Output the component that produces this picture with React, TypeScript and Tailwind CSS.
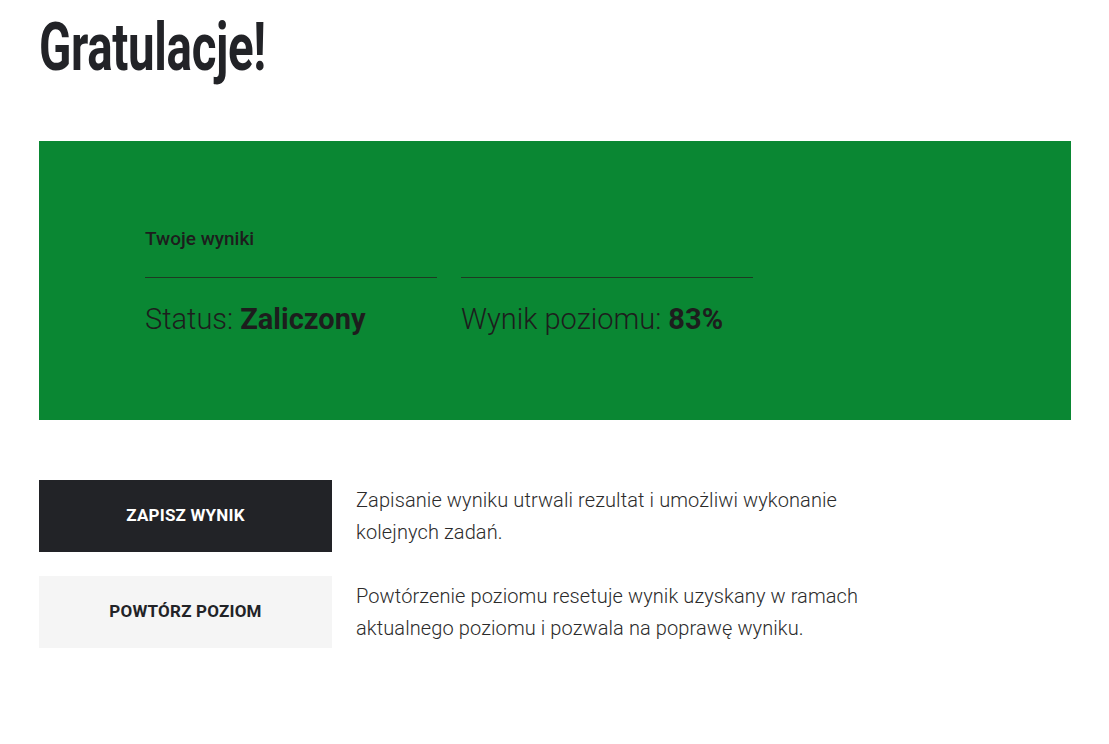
export default function App() {
  return (
    <div className="min-h-screen bg-white pl-[39px] pr-[38px] pt-[15px] font-['Roboto',sans-serif] text-[#222327]">
      {/* Title */}
      <h1 className="h-[66px] text-[66px] leading-[66px] font-bold text-[#222327]">
        <span className="inline-block origin-left scale-x-[0.72] tracking-[-0.5px]">Gratulacje!</span>
      </h1>

      {/* Results panel */}
      <section className="mt-[60px] h-[279px] bg-[#0a8733] pl-[106px] pt-[86px]">
        <h2 className="text-[19px] leading-[24px] font-medium text-[#1d1d1d]">Twoje wyniki</h2>
        <div className="mt-[26px] flex gap-[24px]">
          <ResultCell label="Status:" value="Zaliczony" />
          <ResultCell label="Wynik poziomu:" value="83%" />
        </div>
      </section>

      {/* Actions */}
      <div className="mt-[60px] flex flex-col gap-[24px]">
        <ActionRow
          label="Zapisz wynik"
          dark
          description="Zapisanie wyniku utrwali rezultat i umożliwi wykonanie kolejnych zadań."
        />
        <ActionRow
          label="Powtórz poziom"
          description="Powtórzenie poziomu resetuje wynik uzyskany w ramach aktualnego poziomu i pozwala na poprawę wyniku."
        />
      </div>
    </div>
  )
}

function ResultCell({ label, value }: { label: string; value: string }) {
  return (
    <div className="w-[292px] border-t border-[#1d3a22] pt-[24px]">
      <p className="text-[29px] leading-[34px] font-light text-[#1d1d1d]">
        {label} <strong className="font-bold">{value}</strong>
      </p>
    </div>
  )
}

interface ActionRowProps {
  label: string
  description: string
  dark?: boolean
}

function ActionRow({ label, description, dark }: ActionRowProps) {
  return (
    <div className="flex items-start gap-[24px]">
      <button
        className={
          dark
            ? 'flex h-[72px] w-[293px] shrink-0 items-center justify-center bg-[#222327] text-[17px] font-bold uppercase tracking-[0.2px] text-white'
            : 'flex h-[72px] w-[293px] shrink-0 items-center justify-center bg-[#f5f5f5] text-[17px] font-bold uppercase tracking-[0.2px] text-[#222327]'
        }
      >
        {label}
      </button>
      <p className="mt-[4px] w-[520px] text-[20px] leading-[32px] font-light tracking-[0.1px] text-[#2b2b2b]">
        {description}
      </p>
    </div>
  )
}
